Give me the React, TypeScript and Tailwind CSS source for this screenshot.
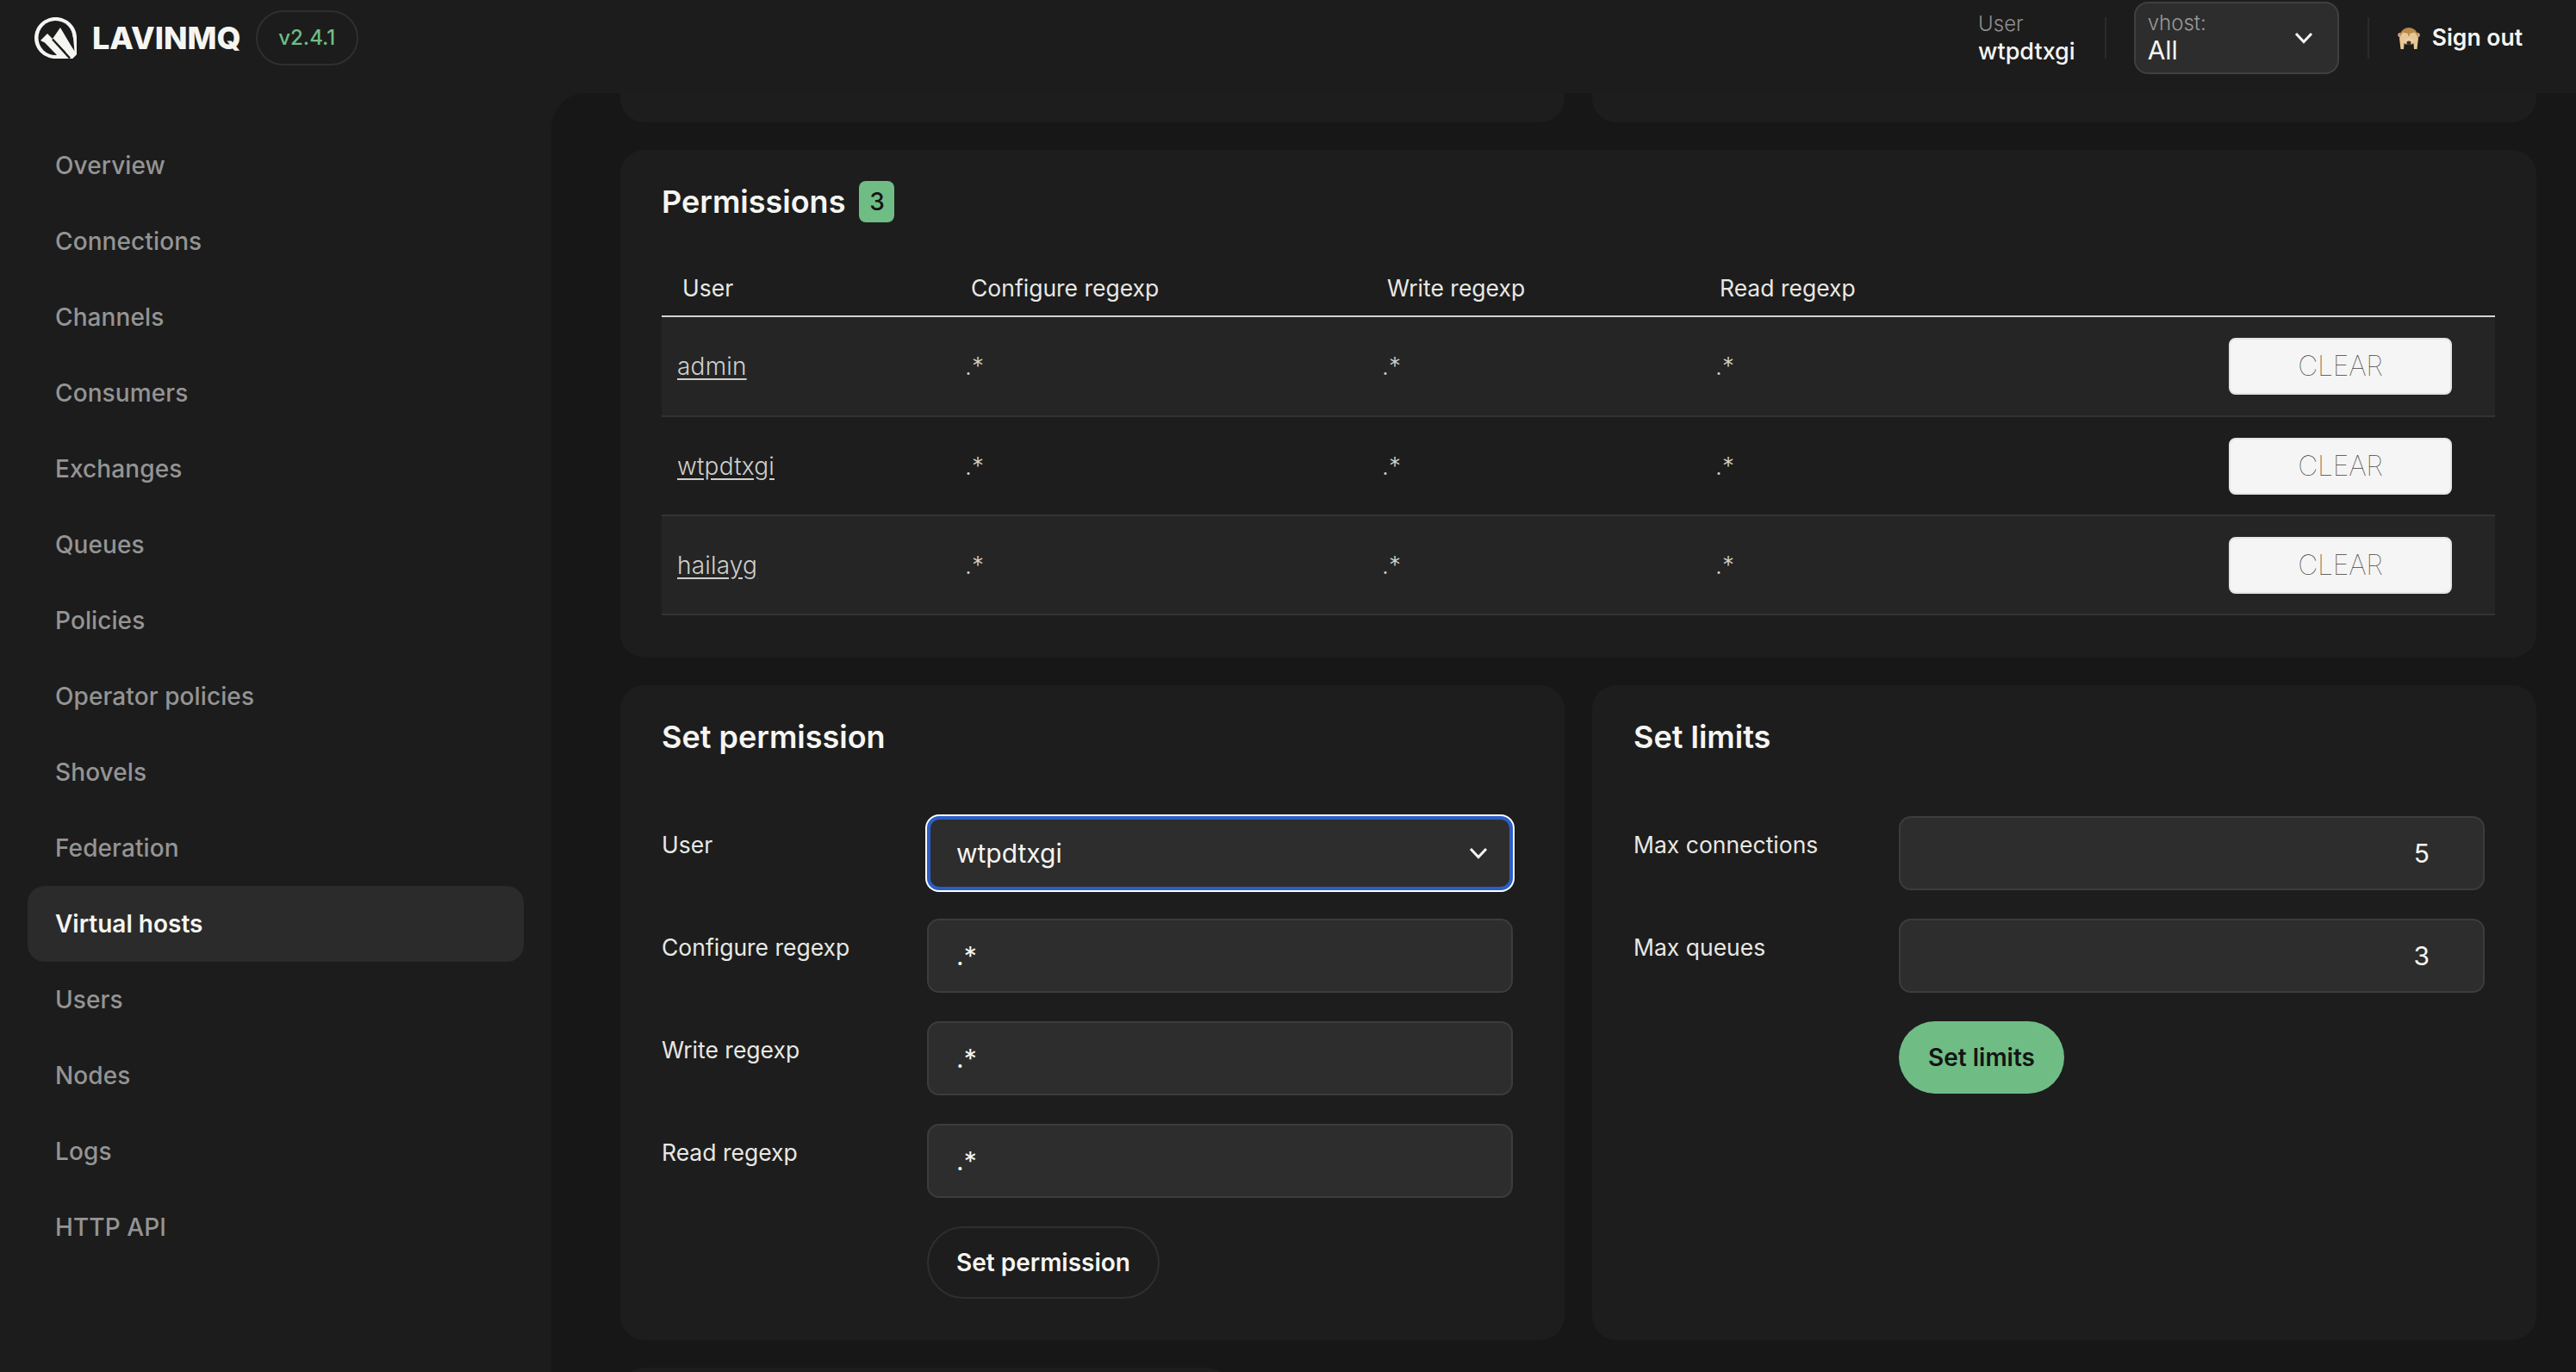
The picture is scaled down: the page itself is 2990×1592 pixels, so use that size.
const navItems = [
  "Overview",
  "Connections",
  "Channels",
  "Consumers",
  "Exchanges",
  "Queues",
  "Policies",
  "Operator policies",
  "Shovels",
  "Federation",
  "Virtual hosts",
  "Users",
  "Nodes",
  "Logs",
  "HTTP API",
];

const permissions = ["admin", "wtpdtxgi", "hailayg"];

function Logo() {
  return (
    <svg width="49" height="48" viewBox="0 0 49 48">
      <path
        fill="#f5f5f2"
        d="M24.5 0C38 0 49 10.7 49 24V43L44 48H24.5C11 48 0 37.3 0 24S11 0 24.5 0Z"
      />
      <circle cx="24.5" cy="24" r="20" fill="#1c1c1c" />
      <polygon fill="#1c1c1c" points="38,14 45,24 46.5,40.5 42,33" />
      <polygon fill="#f5f5f2" points="30,12 43,34 49,43 44,48 21,25" />
      <polygon fill="#f5f5f2" points="15,19 21,25 39,46 27,45 12,29.5 7,27" />
      <path stroke="#1c1c1c" strokeWidth="2.4" d="M21 25.5 L41 47.5" />
    </svg>
  );
}

function Monkey() {
  return (
    <svg width="26" height="25" viewBox="0 0 26 25">
      <circle cx="2.8" cy="8.5" r="2.6" fill="#d99c88" />
      <circle cx="23.2" cy="8.5" r="2.6" fill="#d99c88" />
      <ellipse cx="13" cy="10" rx="10.5" ry="10" fill="#b98a4c" />
      <ellipse cx="13" cy="15" rx="6.5" ry="5" fill="#e9cfa8" />
      <ellipse cx="13" cy="18" rx="2.6" ry="2.4" fill="#4a2a1c" />
      <path fill="#e7c795" d="M2 12 6 5.5 12 7 12.5 12.5 8 13.5 7 25H3.5Z" />
      <path fill="#e7c795" d="M24 12 20 5.5 14 7 13.5 12.5 18 13.5 19 25H22.5Z" />
    </svg>
  );
}

function Chevron() {
  return (
    <svg width="22" height="14" viewBox="0 0 22 14" fill="none">
      <path d="M2 2 L11 11.5 L20 2" stroke="#f5f5f2" strokeWidth="3" />
    </svg>
  );
}

function Card({ title, children }: { title: string; children: React.ReactNode }) {
  return (
    <section className="bg-[#1d1d1d] rounded-[28px] pt-[36px] pl-[48px] pr-[60px] pb-[48px]">
      <h2 className="h-[48px] flex items-center text-[36px] font-semibold text-[#f5f5f2]">{title}</h2>
      {children}
    </section>
  );
}

function Field({ label, children }: { label: string; children: React.ReactNode }) {
  return (
    <div className="flex">
      <label className="w-[308px] shrink-0 text-[26.5px] leading-[66px] text-[#e8e8e4]">{label}</label>
      <div className="flex-1">{children}</div>
    </div>
  );
}

function TextInput({ value, right }: { value: string; right?: boolean }) {
  return (
    <input
      readOnly
      value={value}
      className={
        right
          ? "w-full h-[86px] rounded-[14px] border-2 border-[#3c3c3c] bg-[#2d2d2d] pr-[62px] text-right text-[30px] text-[#f5f5f2] outline-none"
          : "w-full h-[86px] rounded-[14px] border-2 border-[#3c3c3c] bg-[#2d2d2d] px-[32px] text-[30px] text-[#f5f5f2] outline-none"
      }
    />
  );
}

export default function App() {
  return (
    <div className="w-[2990px] h-[1592px] overflow-hidden flex flex-col bg-[#1c1c1c] font-[Inter,sans-serif]">
      <header className="h-[108px] shrink-0 flex items-center">
        <div className="ml-[40px] mt-[-20px] flex items-center">
          <Logo />
          <span className="ml-[18px] text-[36px] font-extrabold text-[#f5f5f2]">LAVINMQ</span>
          <span className="ml-[17px] w-[119px] h-[64px] rounded-full border-2 border-[#2f2f2f] flex items-center justify-center text-[24px] font-medium text-[#6fbd85]">
            v2.4.1
          </span>
        </div>
        <div className="ml-auto mt-[-20px] flex items-center">
          <div className="flex flex-col">
            <span className="text-[24px] leading-[32px] font-light text-[#8f8f8f]">User</span>
            <span className="text-[27px] leading-[32px] font-medium text-[#f5f5f2]">wtpdtxgi</span>
          </div>
          <div className="ml-[34px] w-[2px] h-[48px] bg-[#2a2a2a]" />
          <div className="ml-[32px] w-[238px] h-[84px] rounded-[16px] border-2 border-[#404040] bg-[#2d2d2d] pl-[14px] pr-[28px] flex items-center justify-between">
            <div className="flex flex-col">
              <span className="text-[24px] leading-[28px] font-light text-[#9a9a9a]">vhost:</span>
              <span className="text-[30px] leading-[34px] text-[#f5f5f2]">All</span>
            </div>
            <Chevron />
          </div>
          <div className="ml-[33px] w-[2px] h-[48px] bg-[#2a2a2a]" />
          <div className="ml-[33px] mr-[62px] flex items-center gap-[14px]">
            <Monkey />
            <span className="text-[26.5px] font-semibold text-[#f5f5f2]">Sign out</span>
          </div>
        </div>
      </header>

      <div className="flex-1 min-h-0 flex">
        <nav className="w-[640px] shrink-0 pl-[32px] pr-[32px] pt-[40px]">
          {navItems.map((item) =>
            item === "Virtual hosts" ? (
              <div
                key={item}
                className="h-[88px] rounded-[20px] bg-[#2b2b2b] pl-[32px] flex items-center text-[28px] font-semibold text-[#f5f5f2]"
              >
                {item}
              </div>
            ) : (
              <div
                key={item}
                className="h-[88px] pl-[32px] flex items-center text-[28px] tracking-[0.1px] font-medium text-[#949494]"
              >
                {item}
              </div>
            ),
          )}
        </nav>

        <main className="flex-1 min-w-0 overflow-hidden rounded-tl-[40px] bg-[#171717] pl-[80px] pr-[46px] flex flex-col gap-[32px]">
          <div className="grid grid-cols-2 gap-[32px] shrink-0">
            <div className="h-[34px] bg-[#1d1d1d] rounded-b-[28px]" />
            <div className="h-[34px] bg-[#1d1d1d] rounded-b-[28px]" />
          </div>

          <section className="shrink-0 h-[589px] bg-[#1d1d1d] rounded-[28px] pt-[36px] px-[48px]">
            <h2 className="h-[48px] flex items-center text-[36px] font-semibold text-[#f5f5f2]">
              Permissions
              <span className="ml-[16px] w-[41px] h-[48px] rounded-[8px] bg-[#6fbd85] text-[#141414] text-[28px] font-medium flex items-center justify-center">
                3
              </span>
            </h2>
            <table className="mt-[46px] w-full table-fixed text-[28px]">
              <thead>
                <tr className="h-[63px] border-b-2 border-[#d4d4cf] text-left text-[26.5px] text-[#e8e8e4]">
                  <th className="w-[335px] pl-[24px] font-normal">User</th>
                  <th className="w-[484px] pl-[24px] font-normal">Configure regexp</th>
                  <th className="w-[387px] pl-[23px] font-normal">Write regexp</th>
                  <th className="w-[584px] pl-[22px] font-normal">Read regexp</th>
                  <th />
                </tr>
              </thead>
              <tbody>
                {permissions.map((user, i) => (
                  <tr
                    key={user}
                    className={
                      i === 0
                        ? "h-[116px] border-b-2 border-[#333333] bg-[#252525] text-[#cfcfca]"
                        : i === 2
                          ? "h-[115px] border-b-2 border-[#333333] bg-[#252525] text-[#cfcfca]"
                          : "h-[115px] border-b-2 border-[#333333] text-[#cfcfca]"
                    }
                  >
                    <td className="pl-[18px] font-light tracking-[0.2px] underline underline-offset-[4px]">{user}</td>
                    <td className="pl-[17px] font-light">.*</td>
                    <td className="pl-[17px] font-light">.*</td>
                    <td className="pl-[17px] font-light">.*</td>
                    <td className="pl-[29px]">
                      <button className="w-[259px] h-[66px] rounded-[8px] border-2 border-[#e4e4e4] bg-[#f5f5f5] text-[32px] font-thin tracking-[-0.3px] text-[#444444]">
                        CLEAR
                      </button>
                    </td>
                  </tr>
                ))}
              </tbody>
            </table>
          </section>

          <div className="grid grid-cols-2 gap-[32px] shrink-0 h-[760px]">
            <Card title="Set permission">
              <div className="mt-[68px] flex flex-col gap-[33px]">
                <Field label="User">
                  <div className="relative">
                    <select className="w-full h-[86px] appearance-none rounded-[14px] border-[4px] border-[#2b5fc7] bg-[#2d2d2d] px-[30px] text-[30px] text-[#f5f5f2] ring-2 ring-white outline-none">
                      <option>wtpdtxgi</option>
                    </select>
                    <span className="absolute right-[29px] top-[36px] flex">
                      <Chevron />
                    </span>
                  </div>
                </Field>
                <Field label="Configure regexp">
                  <TextInput value=".*" />
                </Field>
                <Field label="Write regexp">
                  <TextInput value=".*" />
                </Field>
                <Field label="Read regexp">
                  <TextInput value=".*" />
                </Field>
                <div className="pl-[308px]">
                  <button className="h-[84px] w-[270px] rounded-full border-2 border-[#2f2f2f] text-[28px] font-semibold text-[#f5f5f2]">
                    Set permission
                  </button>
                </div>
              </div>
            </Card>
            <Card title="Set limits">
              <div className="mt-[68px] flex flex-col gap-[33px]">
                <Field label="Max connections">
                  <TextInput value="5" right />
                </Field>
                <Field label="Max queues">
                  <TextInput value="3" right />
                </Field>
                <div className="pl-[308px]">
                  <button className="h-[84px] w-[192px] rounded-full bg-[#6fbd85] text-[28px] font-semibold text-[#141414]">
                    Set limits
                  </button>
                </div>
              </div>
            </Card>
          </div>

          <div className="shrink-0 w-[709px] h-[40px] bg-[#1d1d1d] rounded-t-[28px]" />
        </main>
      </div>
    </div>
  );
}
